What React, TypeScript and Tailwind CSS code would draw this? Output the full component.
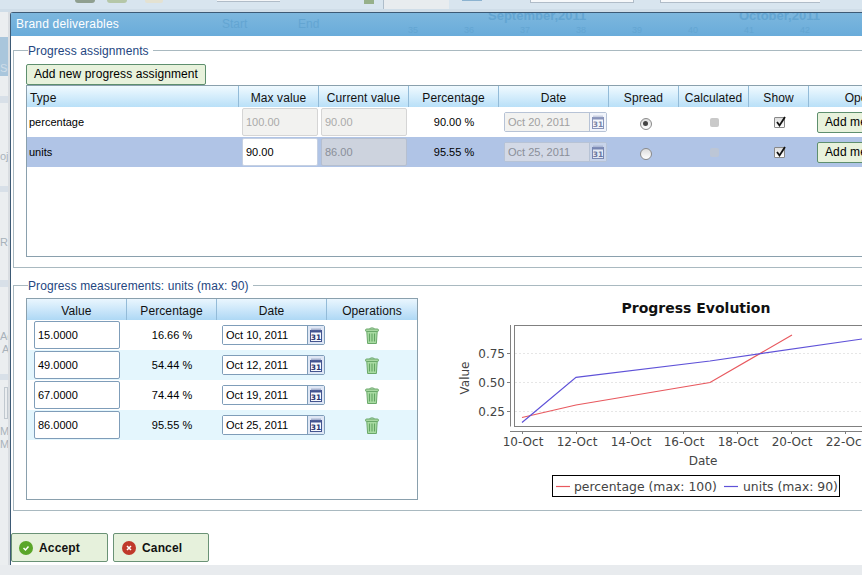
const font = "font-['Liberation_Sans',Arial,sans-serif]";

const assignments = [
  { type: "percentage", max: "100.00", current: "90.00", pct: "90.00 %", date: "Oct 20, 2011", spread: true, selected: false },
  { type: "units", max: "90.00", current: "86.00", pct: "95.55 %", date: "Oct 25, 2011", spread: false, selected: true },
];

const measurements = [
  { value: "15.0000", pct: "16.66 %", date: "Oct 10, 2011" },
  { value: "49.0000", pct: "54.44 %", date: "Oct 12, 2011" },
  { value: "67.0000", pct: "74.44 %", date: "Oct 19, 2011" },
  { value: "86.0000", pct: "95.55 %", date: "Oct 25, 2011" },
];

const weeks = ["35", "36", "37", "38", "39", "40", "41", "42"];

function CalendarIcon({ faded }: { faded?: boolean }) {
  return (
    <svg width="12" height="14" viewBox="0 0 12 14" className={faded ? "opacity-60" : ""}>
      <rect x="0.5" y="2.5" width="11" height="11" fill="#f6f8fc" stroke="#44558f" />
      <rect x="0.5" y="2.5" width="11" height="2" fill="#44558f" />
      <path d="M2 0.5v2M4 0.5v2M6 0.5v2M8 0.5v2M10 0.5v2" stroke="#7280ad" strokeWidth="1" />
      <text x="6" y="12" textAnchor="middle" fontSize="7.5" fontWeight="bold" fontFamily="'DejaVu Sans', sans-serif" fill="#26336b">31</text>
    </svg>
  );
}

function TrashIcon() {
  return (
    <svg width="14" height="17" viewBox="0 0 14 17">
      <path d="M4.500 2c0-1.500 5-1.500 5 0" fill="none" stroke="#6aa86a" />
      <rect x="0.5" y="2" width="13" height="2.500" rx="1.200" fill="#a8d8a2" stroke="#6aa86a" />
      <path d="M1.800 4.500h10.400l-.8 12H2.600z" fill="#a8dba2" stroke="#6aa86a" />
      <path d="M4.500 6.500v8M7 6.500v8M9.500 6.500v8" stroke="#62a562" strokeWidth="1.100" />
    </svg>
  );
}

function DateBox({ date, disabled, selected }: { date: string; disabled?: boolean; selected?: boolean }) {
  const bg = disabled ? (selected ? "bg-[#d3d9e6] text-[#8a8f99]" : "bg-[#f2f2f0] text-[#a0a0a0]") : "bg-white text-black";
  const border = disabled ? "border-[#b7c3d6]" : "border-[#7f9db9]";
  return (
    <div className={`flex h-5 w-[103px] border rounded-[2px] ${border}`}>
      <div className={`w-[85px] pl-[3px] text-[11px] leading-[18px] border-r ${border} ${bg}`}>{date}</div>
      <div className={`flex-1 flex items-center justify-center ${disabled ? (selected ? "bg-[#c8d4ea]" : "bg-[#f2f5fb]") : "bg-[#dfe7f5]"}`}>
        <CalendarIcon faded={disabled} />
      </div>
    </div>
  );
}

function HeaderCell({ label, width, left }: { label: string; width: string; left?: boolean }) {
  return (
    <div className={`${width} shrink-0 h-full border-r border-[#93bbd8] flex items-center pt-[2px] ${left ? "pl-[3px]" : "justify-center"}`}>
      {label}
    </div>
  );
}

function Legend({ label }: { label: string }) {
  return (
    <div className="flex items-center border-t border-[#a9b9c0] h-0 w-full">
      <span className="ml-[14px] pr-[4px] bg-white text-[#24467f] text-[12px] tracking-[0.1px] whitespace-nowrap">{label}</span>
    </div>
  );
}

function AssignmentsTable() {
  return (
    <div className="w-[1000px] h-[172px] border border-[#8aa0ad] text-[11px]">
      <div className="h-[21px] flex bg-gradient-to-b from-[#f0faff] to-[#b9e0f8] text-[12px] tracking-[0.1px] text-[#111]">
        <HeaderCell label="Type" width="w-[212px]" left />
        <HeaderCell label="Max value" width="w-20" />
        <HeaderCell label="Current value" width="w-[90px]" />
        <HeaderCell label="Percentage" width="w-[90px]" />
        <HeaderCell label="Date" width="w-[110px]" />
        <HeaderCell label="Spread" width="w-[70px]" />
        <HeaderCell label="Calculated" width="w-[70px]" />
        <HeaderCell label="Show" width="w-[60px]" />
        <HeaderCell label="Operations" width="w-[132px]" />
      </div>
      {assignments.map((row) => (
        <div key={row.type} className={`h-[30px] flex items-center ${row.selected ? "bg-[#b0c4e6]" : "bg-white"}`}>
          <div className="w-[212px] pl-[2px] text-black">{row.type}</div>
          <div className="w-20 pl-[3px]">
            {row.selected ? (
              <div className="w-[76px] h-7 bg-white border border-[#c5d0e2] rounded-[2px] pl-[3px] leading-[26px] text-black">{row.max}</div>
            ) : (
              <div className="w-[76px] h-7 bg-[#f2f2f0] border border-[#d5d5d5] rounded-[2px] pl-[3px] text-[#aaa] leading-[26px]">{row.max}</div>
            )}
          </div>
          <div className="w-[90px] pl-[2px]">
            <div className={`w-[86px] h-7 border rounded-[2px] pl-[3px] leading-[26px] ${row.selected ? "bg-[#cdd3de] border-[#b5bfd0] text-[#8a8f99]" : "bg-[#f2f2f0] border-[#d5d5d5] text-[#aaa]"}`}>{row.current}</div>
          </div>
          <div className="w-[90px] text-center text-black">{row.pct}</div>
          <div className="w-[110px] pl-[5px]">
            <DateBox date={row.date} disabled selected={row.selected} />
          </div>
          <div className="w-[70px] flex justify-center pl-[3px] pt-[3px]">
            <div className="w-3 h-3 rounded-full border border-[#8a8a8a] bg-gradient-to-b from-[#dcdcdc] to-white flex items-center justify-center">
              {row.spread && <div className="w-[5px] h-[5px] rounded-full bg-[#444]" />}
            </div>
          </div>
          <div className="w-[70px] flex justify-center">
            <div className={`w-[9px] h-[9px] rounded-[2px] ${row.selected ? "bg-[#bcc6d6]" : "bg-[#c9c9c9]"}`} />
          </div>
          <div className="w-[60px] flex justify-center">
            <div className="relative w-[11px] h-[11px] border border-[#888] bg-gradient-to-b from-[#ddd] to-white rounded-[1px]">
              <svg width="13" height="13" viewBox="0 0 13 13" className="absolute -top-[3px] left-0">
                <path d="M2 7l2.500 3.500L10 2" fill="none" stroke="#111" strokeWidth="1.800" />
              </svg>
            </div>
          </div>
          <div className="pl-2">
            <div className="w-[110px] h-[21px] border border-[#5e8f6e] rounded-[2px] bg-[#e8f2dc] pl-[7px] text-[12px] tracking-[0.1px] leading-[19px] text-black whitespace-nowrap">Add measurement</div>
          </div>
        </div>
      ))}
    </div>
  );
}

function MeasurementsTable() {
  return (
    <div className="w-[392px] h-[202px] border border-[#8aa0ad] text-[11px] shrink-0">
      <div className="h-[21px] flex bg-gradient-to-b from-[#eaf6fe] to-[#aed8f5] text-[12px] tracking-[0.1px] text-[#111]">
        <HeaderCell label="Value" width="w-[100px]" />
        <HeaderCell label="Percentage" width="w-[90px]" />
        <HeaderCell label="Date" width="w-[110px]" />
        <div className="flex-1 flex items-center justify-center pt-[2px]">Operations</div>
      </div>
      {measurements.map((row, i) => (
        <div key={row.value} className={`h-[30px] flex items-center ${i % 2 ? "bg-[#e4f6fd]" : "bg-white"}`}>
          <div className="w-[100px] pl-[7px]">
            <div className="w-[86px] h-7 bg-white border border-[#7f9db9] rounded-[2px] pl-[3px] leading-[26px] text-black">{row.value}</div>
          </div>
          <div className="w-[90px] text-center text-black">{row.pct}</div>
          <div className="w-[110px] pl-[5px]">
            <DateBox date={row.date} />
          </div>
          <div className="flex-1 flex justify-center">
            <TrashIcon />
          </div>
        </div>
      ))}
    </div>
  );
}

function Chart() {
  const ticks = [["10-Oct", 90], ["12-Oct", 144], ["14-Oct", 198], ["16-Oct", 251], ["18-Oct", 305], ["20-Oct", 359], ["22-Oct", 413]] as const;
  return (
    <svg width="430" height="225" viewBox="0 0 430 225" className="shrink-0" fontFamily="'DejaVu Sans', sans-serif">
      <text x="264" y="33" textAnchor="middle" fontSize="14" fontWeight="bold" fill="#111">Progress Evolution</text>
      <rect x="82.500" y="45.500" width="400" height="101" fill="#fff" stroke="#808080" />
      <path d="M78.500 45v101.500M78 151.500h352" fill="none" stroke="#808080" />
      {[73, 102, 131].map((y, i) => (
        <g key={y}>
          <path d={`M83 ${y}.5h347`} stroke="#e6e6e6" strokeDasharray="2 2" />
          <path d={`M75 ${y}.5h3`} stroke="#808080" />
          <text x="73" y={y + 5} textAnchor="end" fontSize="12" fill="#444">{["0.75", "0.50", "0.25"][i]}</text>
        </g>
      ))}
      {ticks.map(([label, x]) => (
        <g key={label}>
          <path d={`M${x}.5 151v3`} stroke="#808080" />
          <text x={x + 1} y="166" textAnchor="middle" fontSize="12" fill="#444">{label}</text>
        </g>
      ))}
      <text x="271" y="185" textAnchor="middle" fontSize="12" fill="#444">Date</text>
      <text transform="translate(37 98) rotate(-90)" textAnchor="middle" fontSize="12" fill="#444">Value</text>
      <polyline points="90,137.500 144,125 278,102.500 360,55" fill="none" stroke="#e8595f" strokeWidth="1.200" />
      <polyline points="90,142.500 144,97.300 278,81 430,59" fill="none" stroke="#5f52d8" strokeWidth="1.200" />
      <rect x="120.500" y="195.500" width="287" height="21" fill="#fff" stroke="#000" />
      <path d="M124 206.500h14" stroke="#e8595f" strokeWidth="1.200" />
      <text x="142" y="210.500" fontSize="12.400" fill="#444">percentage (max: 100)</text>
      <path d="M292 206.500h14" stroke="#5f52d8" strokeWidth="1.200" />
      <text x="311" y="210.500" fontSize="12.400" fill="#444">units (max: 90)</text>
    </svg>
  );
}

function TopStrip() {
  return (
    <div className="h-3 flex shrink-0 bg-[#d8e5ef] border-b-[3px] border-[#cfdde8] overflow-hidden">
      <div className="ml-[75px] w-5 h-[3px] bg-[#8f9f90] rounded-b-[3px]" />
      <div className="ml-3 w-5 h-[3px] bg-[#b5c7a8] rounded-b-[3px]" />
      <div className="ml-[18px] w-[18px] h-[3px] bg-[#e4e2d2] rounded-b-[2px]" />
      <div className="ml-[54px] w-[63px] h-[2px] bg-[#f4f6f8] border-b border-[#b0bcc8]" />
      <div className="ml-[84px] w-[10px] h-[4px] bg-[#96b08a]" />
      <div className="ml-[9px] w-[66px] h-full bg-[#e8ecef] border-l border-[#aebdca]" />
      <div className="ml-[13px] w-5 h-px bg-[#8cb3d0]" />
      <div className="ml-[48px] w-[104px] h-[3px] bg-[#f6f8fa] border-x border-b border-[#b0bcc8]" />
      <div className="ml-[26px] w-[160px] h-[3px] bg-[#f6f8fa] border-l border-b border-[#b0bcc8]" />
    </div>
  );
}

function LeftStrip() {
  return (
    <div className="w-[10px] shrink-0 h-[553px] border-r-2 border-[#d9dde1] bg-[#ebeef0] text-[11px] leading-[13px] text-[#a8b2bb] overflow-hidden">
      <div className="mt-[25px] h-[39px] bg-[#a9c6dc] pt-[25px] text-[#cfdde8]">Sc</div>
      <div className="mt-5 h-[7px] bg-[#d8e0e8]" />
      <div className="mt-[47px]">oj</div>
      <div className="mt-[23px] h-[6px] bg-[#d8e0e8]" />
      <div className="mt-[44px]">Re</div>
      <div className="mt-[31px] h-[7px] bg-[#d8e0e8]" />
      <div className="mt-[43px]">Ac</div>
      <div className="pl-[2px]">A</div>
      <div className="mt-[18px] h-[6px] bg-[#d8e0e8]" />
      <div className="mt-[7px] ml-[4px] h-[32px] border border-[#c0c8cf]" />
      <div className="mt-[6px]">Mc</div>
      <div>M</div>
    </div>
  );
}

function TitleBar() {
  return (
    <div className="relative h-[23px] bg-gradient-to-b from-[#7db7de] to-[#69acda] text-white text-[12px] tracking-[0.2px] leading-[23px] pl-[5px] overflow-hidden">
      Brand deliverables
      <div className="absolute inset-0 text-[#63a5d2] tracking-normal">
        <span className="absolute left-[211px] top-0 text-[12px]">Start</span>
        <span className="absolute left-[287px] top-0 text-[12px]">End</span>
        <span className="absolute left-[477px] -top-[9px] text-[13px] font-bold">September,2011</span>
        <span className="absolute left-[728px] -top-[9px] text-[13px] font-bold">October,2011</span>
        <div className="absolute left-[374px] top-[6px] flex text-[9px]">
          {weeks.map((w) => (
            <span key={w} className="w-14 text-center">{w}</span>
          ))}
        </div>
      </div>
    </div>
  );
}

export default function App() {
  return (
    <div className={`w-[862px] h-[575px] overflow-hidden bg-[#e8ebee] flex flex-col ${font}`}>
      <TopStrip />
      <div className="flex">
        <LeftStrip />
        <div className="w-[1000px] h-[553px] shrink-0 bg-white border-t border-l border-[#3d5a75] rounded-tl-[3px]">
          <TitleBar />
          <div className="pt-[14px] pl-[2px]">
            <div className="h-[218px] border-l border-b border-[#a9b9c0]">
              <Legend label="Progress assignments" />
              <div className="pt-[13px] pl-[12px]">
                <div className="w-[180px] h-[21px] border border-[#5e8f6e] rounded-[2px] bg-[#e8f2dc] text-[12px] tracking-[0.1px] leading-[19px] text-center text-black">Add new progress assignment</div>
                <AssignmentsTable />
              </div>
            </div>
            <div className="mt-[17px] h-[226px] border-l border-b border-[#a9b9c0]">
              <Legend label="Progress measurements: units (max: 90)" />
              <div className="pt-[12px] pl-[12px] flex items-start gap-[14px]">
                <MeasurementsTable />
                <div className="-mt-[18px]"><Chart /></div>
              </div>
            </div>
            <div className="pt-[22px] -ml-[2px] flex gap-[5px]">
              <div className="w-[97px] h-[29px] border border-[#6a9276] rounded-[2px] bg-[#e6f1dc] flex items-center pl-[7px] gap-[6px] text-[12px] tracking-[0.15px] font-bold text-[#111]">
                <svg width="14" height="14" viewBox="0 0 14 14"><circle cx="7" cy="7" r="7" fill="#5aa629" /><path d="M4.500 7l2 2 3-3.500" fill="none" stroke="#fff" strokeWidth="1.500" /></svg>
                Accept
              </div>
              <div className="w-[96px] h-[29px] border border-[#6a9276] rounded-[2px] bg-[#e6f1dc] flex items-center pl-2 gap-[6px] text-[12px] tracking-[0.15px] font-bold text-[#111]">
                <svg width="14" height="14" viewBox="0 0 14 14"><circle cx="7" cy="7" r="7" fill="#c0392b" /><path d="M5 5l4 4M9 5l-4 4" fill="none" stroke="#fff" strokeWidth="1.500" /></svg>
                Cancel
              </div>
            </div>
          </div>
        </div>
      </div>
    </div>
  );
}
